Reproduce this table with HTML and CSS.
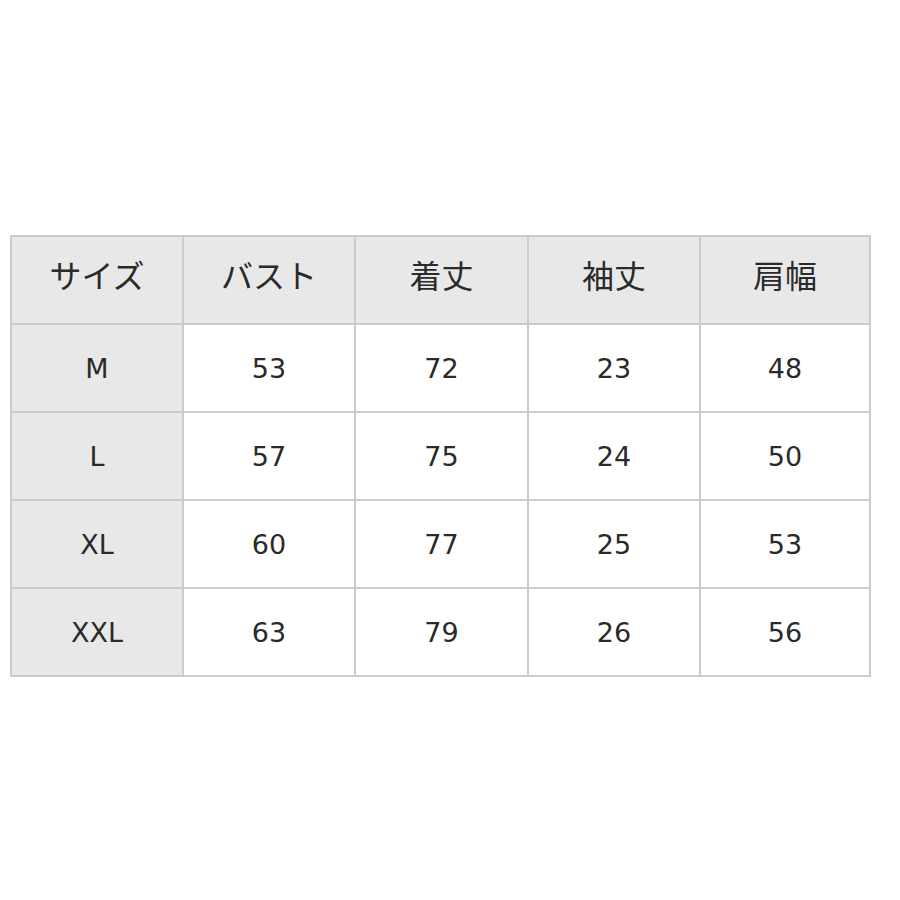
FILE: index.html
```html
<!DOCTYPE html>
<html lang="ja">
<head>
<meta charset="utf-8">
<link rel="stylesheet" href="styles.css">
</head>
<body>
<div class="wrap">
<table class="size-table">
  <colgroup>
    <col class="c1"><col class="c2"><col class="c3"><col class="c4"><col class="c5">
  </colgroup>
  <thead>
    <tr><th>サイズ</th><th>バスト</th><th>着丈</th><th>袖丈</th><th>肩幅</th></tr>
  </thead>
  <tbody>
    <tr><th>M</th><td>53</td><td>72</td><td>23</td><td>48</td></tr>
    <tr><th>L</th><td>57</td><td>75</td><td>24</td><td>50</td></tr>
    <tr><th>XL</th><td>60</td><td>77</td><td>25</td><td>53</td></tr>
    <tr><th>XXL</th><td>63</td><td>79</td><td>26</td><td>56</td></tr>
  </tbody>
</table>
</div>
</body>
</html>
```
FILE: styles.css
```css
html, body {
  margin: 0;
  padding: 0;
  background: #ffffff;
}
.wrap {
  padding: 235px 0 0 10px;
}
.size-table {
  border-collapse: collapse;
  table-layout: fixed;
  width: 859px;
  font-family: "DejaVu Sans", "Noto Sans CJK JP", sans-serif;
  color: #2a2a2a;
}
.c1, .c2, .c4 { width: 172px; }
.c3 { width: 173px; }
.c5 { width: 170px; }
.size-table th,
.size-table td {
  border: 2px solid #cbcbcb;
  height: 86px;
  padding: 0;
  text-align: center;
  vertical-align: middle;
  font-weight: normal;
  font-size: 27px;
}
.size-table thead th {
  background: #e8e8e8;
  font-size: 32px;
  font-family: "Noto Sans CJK JP", sans-serif;
  height: 74px;
  padding-bottom: 12px;
}
.size-table tbody th {
  background: #e8e8e8;
}
.size-table td {
  background: #ffffff;
}
```
